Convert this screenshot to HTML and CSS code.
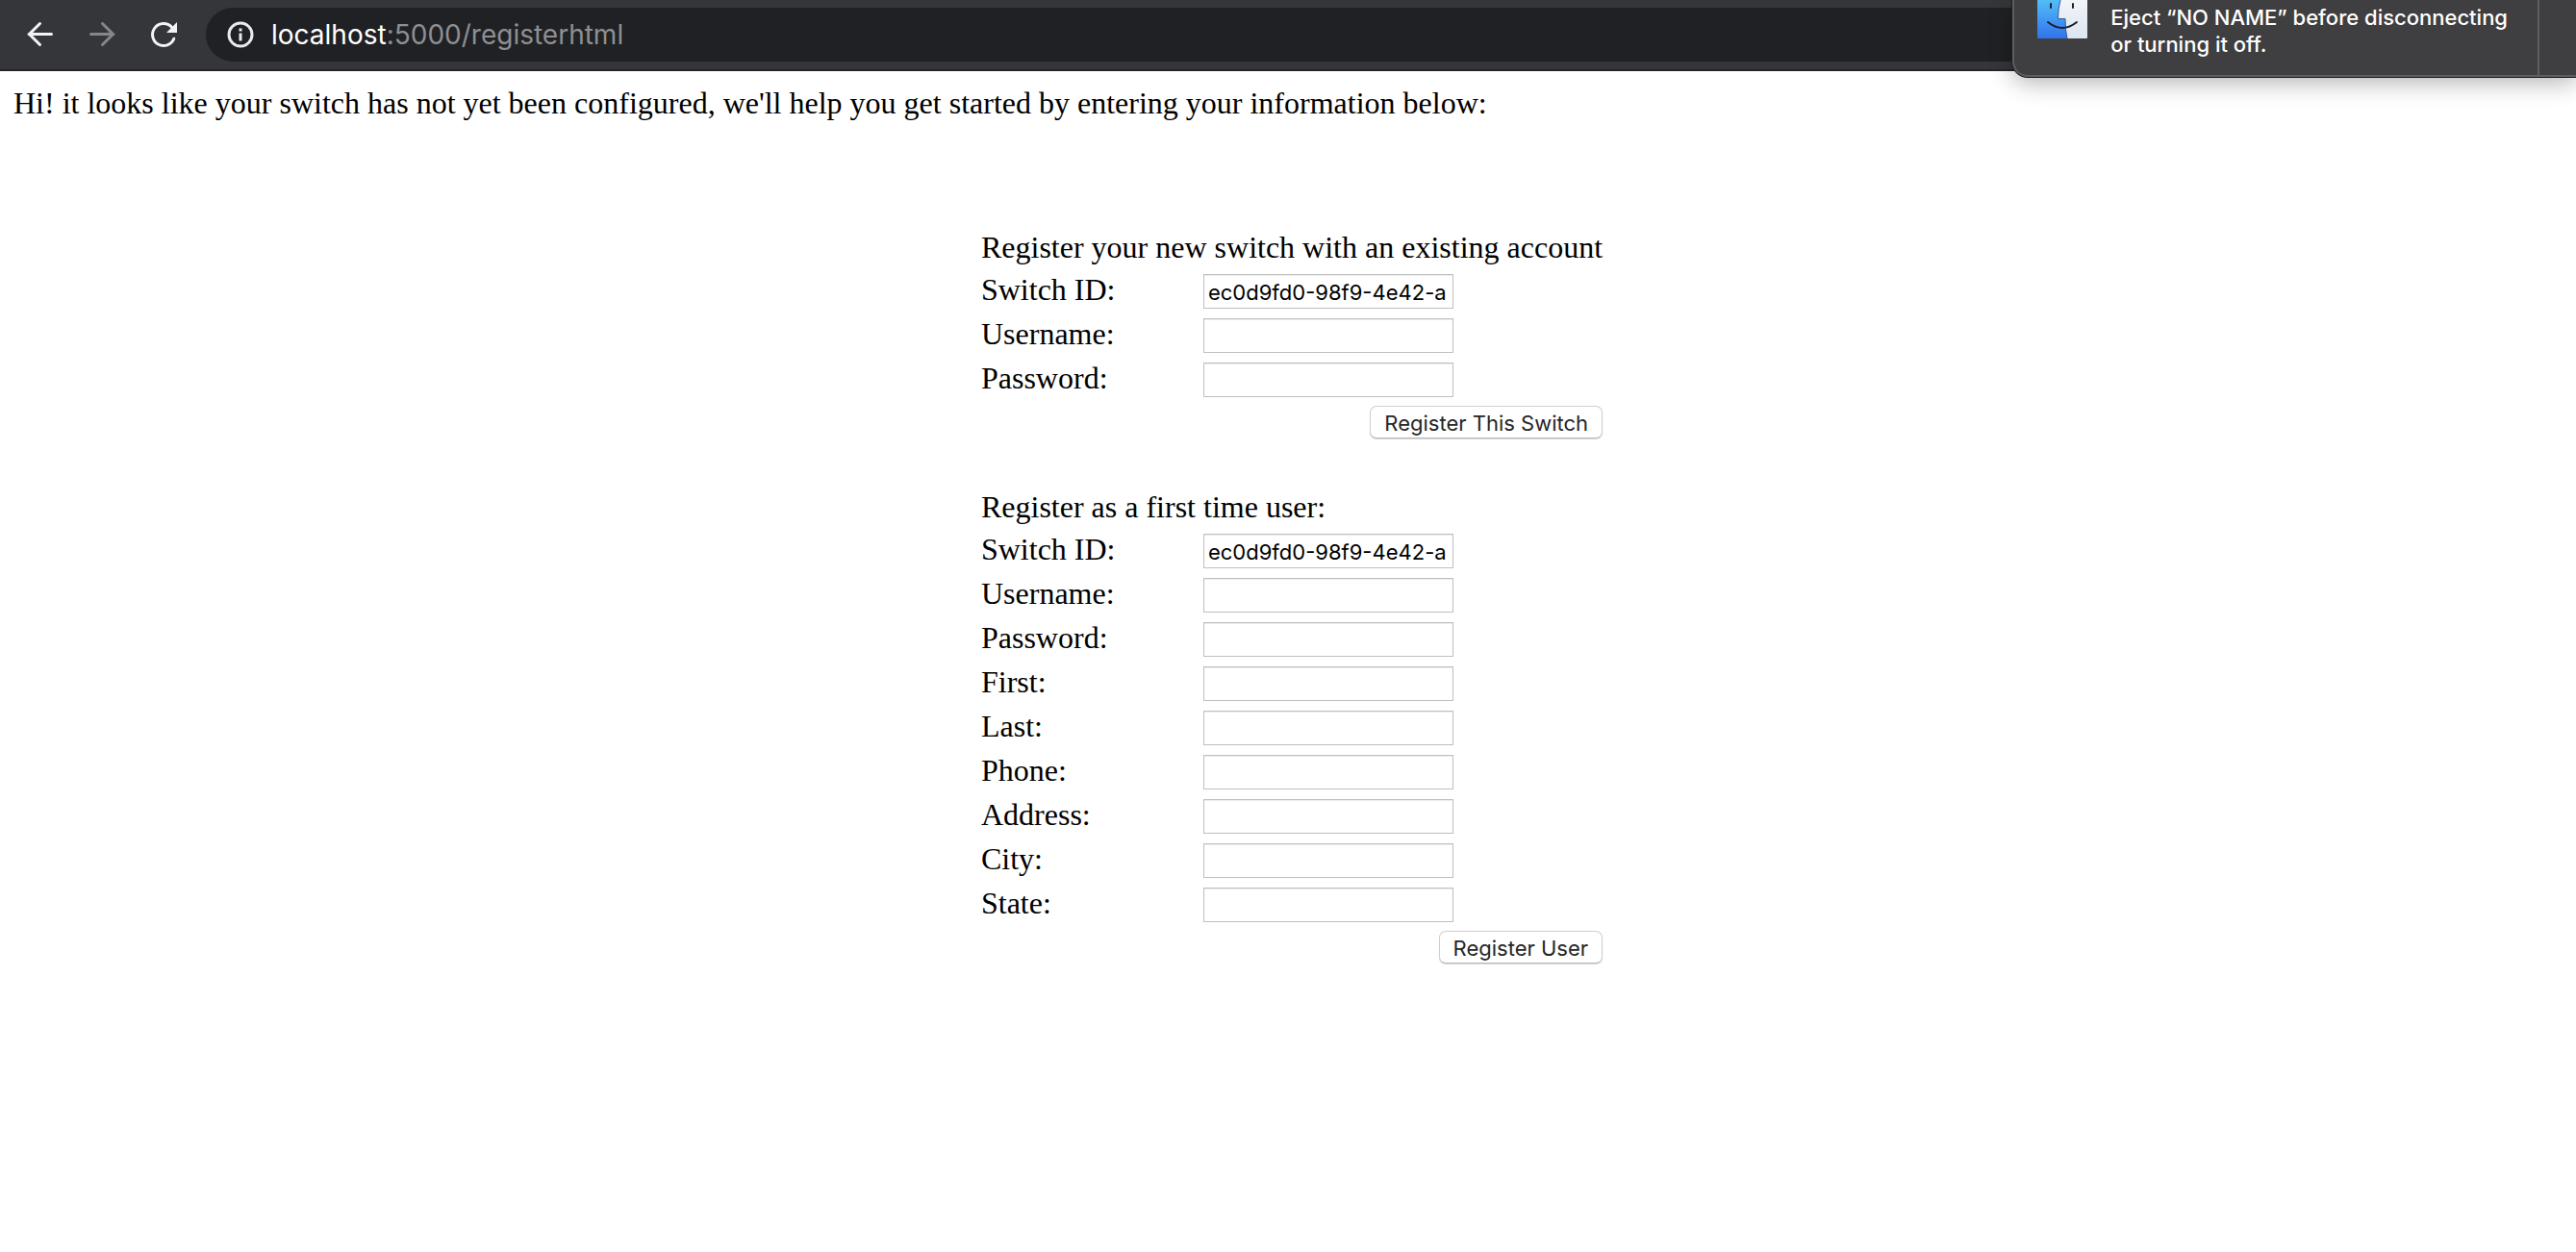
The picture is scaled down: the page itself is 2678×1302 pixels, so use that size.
FILE: index.html
```html
<!DOCTYPE html>
<html lang="en">
<head>
<meta charset="utf-8">
<meta name="viewport" content="width=device-width, initial-scale=1">
<title>Register your switch</title>
<link rel="stylesheet" href="styles.css">
</head>
<body>
<header class="toolbar">
  <nav class="nav">
    <button class="nav-button" type="button" aria-label="Back">
      <svg width="32" height="32" viewBox="0 0 32 32"><path d="M27.500 15.500H4M15.500 4.500L4.500 15.500l11 11"/></svg>
    </button>
    <button class="nav-button" type="button" aria-label="Forward" disabled>
      <svg width="32" height="32" viewBox="0 0 32 32"><path d="M4.500 15.500H28M16.500 4.500l11 11l-11 11"/></svg>
    </button>
    <button class="nav-button" type="button" aria-label="Reload">
      <svg width="32" height="32" viewBox="0 0 32 32"><path d="M26.800 20.200A11.500 11.500 0 1 1 24.500 8.200"/><path class="solid" d="M30 3v11H19z"/></svg>
    </button>
  </nav>
  <div class="omnibox">
    <svg class="info" width="28" height="28" viewBox="0 0 28 28" aria-hidden="true"><circle cx="14" cy="14" r="12"/><path d="M14 12.500v8M14 7.500v3"/></svg>
    <span class="url"><span class="host">localhost</span>:5000/registerhtml</span>
  </div>
</header>

<aside class="notification">
  <svg class="finder" width="52" height="40" viewBox="0 0 52 40" aria-hidden="true">
    <defs>
      <linearGradient id="blue" x1="0" y1="0" x2="0" y2="1"><stop offset="0" stop-color="#52bdf6"/><stop offset="1" stop-color="#3272ec"/></linearGradient>
      <linearGradient id="pale" x1="0" y1="0" x2="0" y2="1"><stop offset="0" stop-color="#f3f4f7"/><stop offset="1" stop-color="#dce5f1"/></linearGradient>
    </defs>
    <path fill="url(#pale)" d="M20 0H52V39q0 1-1 1H20z"/>
    <path fill="url(#blue)" d="M0 0H24Q21.500 9 21.500 19.500H29Q29 31 31 40H1q-1 0-1-1z"/>
    <path class="nose" d="M24 0Q21.500 9 21.500 19.500H29Q29 31 31 40"/>
    <path class="face" d="M14 4v4M37 4v4M11 23Q26 35 41 23"/>
  </svg>
  <p class="notification-text">Eject “NO NAME” before disconnecting<br>or turning it off.</p>
  <div class="notification-actions"></div>
</aside>

<main class="page">
  <p class="intro">Hi! it looks like your switch has not yet been configured, we'll help you get started by entering your information below:</p>
  <div class="forms">
    <form class="form">
      <h2 class="title">Register your new switch with an existing account</h2>
      <div class="row"><label for="a-switch">Switch ID:</label><input id="a-switch" type="text" value="ec0d9fd0-98f9-4e42-a"></div>
      <div class="row"><label for="a-user">Username:</label><input id="a-user" type="text"></div>
      <div class="row"><label for="a-pass">Password:</label><input id="a-pass" type="password"></div>
      <button class="submit" type="button">Register This Switch</button>
    </form>
    <form class="form">
      <h2 class="title">Register as a first time user:</h2>
      <div class="row"><label for="b-switch">Switch ID:</label><input id="b-switch" type="text" value="ec0d9fd0-98f9-4e42-a"></div>
      <div class="row"><label for="b-user">Username:</label><input id="b-user" type="text"></div>
      <div class="row"><label for="b-pass">Password:</label><input id="b-pass" type="password"></div>
      <div class="row"><label for="b-first">First:</label><input id="b-first" type="text"></div>
      <div class="row"><label for="b-last">Last:</label><input id="b-last" type="text"></div>
      <div class="row"><label for="b-phone">Phone:</label><input id="b-phone" type="text"></div>
      <div class="row"><label for="b-address">Address:</label><input id="b-address" type="text"></div>
      <div class="row"><label for="b-city">City:</label><input id="b-city" type="text"></div>
      <div class="row"><label for="b-state">State:</label><input id="b-state" type="text"></div>
      <button class="submit" type="button">Register User</button>
    </form>
  </div>
</main>
</body>
</html>
```
FILE: styles.css
```css
* {
  box-sizing: border-box;
}

body {
  margin: 0;
  background: #fff;
  color: #000;
  font-family: "Liberation Serif", "Times New Roman", serif;
  font-size: 32px;
  line-height: 36px;
}

/* Browser toolbar */
.toolbar {
  display: flex;
  align-items: center;
  gap: 20px;
  padding: 8px 0 8px 18px;
  background: #35363a;
  border-bottom: 2px solid #242529;
}

.nav {
  display: flex;
  gap: 16px;
}

.nav-button {
  display: grid;
  place-items: center;
  width: 48px;
  height: 48px;
  padding: 0;
  border: 0;
  background: none;
  color: #f1f3f4;
}

.nav-button:disabled {
  color: #85868a;
}

.nav-button path,
.info {
  fill: none;
  stroke: currentColor;
  stroke-width: 3;
  stroke-linecap: round;
}

.info {
  stroke-linecap: butt;
}

.nav-button .solid {
  fill: currentColor;
  stroke: none;
}

.omnibox {
  display: flex;
  flex: 1;
  align-items: center;
  gap: 18px;
  height: 56px;
  padding-left: 22px;
  border-radius: 28px 0 0 28px;
  background: #202124;
  color: #e8eaed;
}

.url {
  color: #8e8f92;
  font-family: Inter, sans-serif;
  font-size: 28px;
  line-height: 32px;
}

.host {
  color: #fff;
}

/* System notification over the top right corner */
.notification {
  position: absolute;
  top: 0;
  right: 0;
  display: flex;
  height: 80px;
  padding-left: 24px;
  border: solid #5e5d5f;
  border-width: 0 0 2px 2px;
  border-radius: 0 0 0 16px;
  background: #3f3e40;
  box-shadow: 0 0 0 1px #1d1d1f, 0 6px 24px rgba(0, 0, 0, 0.3);
  color: #fff;
}

.nose {
  fill: none;
  stroke: #2c5f94;
  stroke-width: 1;
}

.face {
  fill: none;
  stroke: #17202c;
  stroke-width: 2;
  stroke-linecap: round;
}

.notification-text {
  margin: 4px 31px 0 24px;
  font: 500 22px/28px Inter, sans-serif;
  white-space: nowrap;
}

.notification-actions {
  width: 40px;
  border-left: 2px solid #5e5d5f;
}

/* Registration page */
.page {
  padding: 15px 14px;
}

.intro {
  margin: 0 0 114px;
}

.forms {
  display: grid;
  gap: 53px;
  width: max-content;
  margin: 0 auto;
  padding-left: 8px;
}

.title {
  margin: 0 0 5px;
  font-size: 32px;
  font-weight: 400;
}

.row {
  display: grid;
  grid-template-columns: 231px 260px;
  align-items: center;
  height: 46px;
}

.row label {
  padding-bottom: 4px;
}

.row input {
  width: 260px;
  height: 36px;
  padding: 4px 4px 2px;
  border: 1px solid #bfbfbf;
  border-radius: 0;
  background: #fff;
  box-shadow: inset 0 1px 0 #ececec;
  color: #000;
  font: 22px Inter, sans-serif;
}

.submit {
  display: block;
  height: 34px;
  margin: 4px 0 0 auto;
  padding: 1px 14px 0;
  border: 1px solid #cfcfcf;
  border-bottom-color: #b5b5b5;
  border-radius: 7px;
  background: #fff;
  box-shadow: 0 1px 1px rgba(0, 0, 0, 0.15);
  color: #262626;
  font: 22px Inter, sans-serif;
}
```
